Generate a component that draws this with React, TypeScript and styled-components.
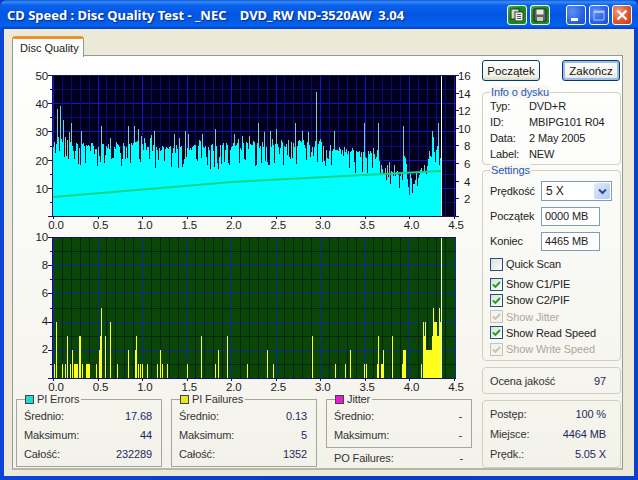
import React from "react";
import styled, { createGlobalStyle } from "styled-components";

const FONT = `"Liberation Sans", Arial, sans-serif`;

const Global = createGlobalStyle`
html, body { margin: 0; padding: 0; background: #0a3cc0; }
body { font-family: ${FONT}; font-size: 11px; letter-spacing: -0.12px; color: #222; }
* { box-sizing: border-box; }
`;

// chart geometry, in page pixels minus the svg origin
const OX = 16;
const PL = 53 - OX;
const PR = 456 - OX;
const W = 460;
const H = 162;
const PT = 7;
const PB = 148;
const Y_STEP = 14.1;
const X_MAJOR = 44.5;

const xLabels = ["0.0", "0.5", "1.0", "1.5", "2.0", "2.5", "3.0", "3.5", "4.0", "4.5"];

// top edge of the PI errors trace: [page x, value]
const envelope = [
  [53, 26], [60, 29], [72, 25], [100, 25], [130, 26], [170, 24], [232, 25], [260, 26],
  [320, 26], [345, 23], [372, 22], [379, 21], [384, 16], [400, 15], [404, 18], [408, 14],
  [420, 15], [425, 17], [431, 24], [441, 26],
];

const spikes: Record<number, number> = {
  57: 38, 60: 39, 63: 34, 71: 33, 81: 30, 101: 32, 128: 32, 134: 32, 138: 31, 154: 30,
  174: 29, 185: 30, 188: 29, 202: 29, 215: 31, 234: 29, 258: 33, 270: 30, 276: 31, 295: 33,
  302: 30, 316: 44, 334: 30, 364: 33, 378: 33, 403: 32, 432: 30, 438: 33,
};

const envelopeAt = (x: number) => {
  for (let i = 1; i < envelope.length; i++) {
    const [x0, v0] = envelope[i - 1];
    const [x1, v1] = envelope[i];
    if (x <= x1) return v0 + ((v1 - v0) * (x - x0)) / (x1 - x0);
  }
  return 24;
};

let seed = 4711;
const rand = () => {
  seed = (seed * 1103515245 + 12345) & 0x7fffffff;
  return seed / 0x7fffffff;
};

const traceValues: number[] = [];
for (let x = 53; x <= 441; x++) {
  const r = rand();
  const base = envelopeAt(x);
  const v = r < 0.24 ? base - 3 - rand() * 5 : r > 0.9 ? base + 1 + rand() * 3 : base - 2 + rand() * 3;
  traceValues.push(spikes[x] ?? v);
}

const valueY = (v: number) => PB - v * 2.82;

let solidPath = "";
let thinPath = "";
traceValues.forEach((v, i) => {
  const x = i + 53 - OX + 0.5;
  const shoulder = Math.max(traceValues[i - 1] ?? 0, traceValues[i + 1] ?? 0);
  const solid = Math.min(v, shoulder);
  solidPath += `M${x} ${PB}V${valueY(solid).toFixed(0)}`;
  if (v > solid) thinPath += `M${x} ${valueY(solid).toFixed(0)}V${valueY(v).toFixed(0)}`;
});

// PI failures bars: [page x, height]
const failures = [
  [54, 1], [56, 4], [62, 1], [65, 1], [67, 3], [70, 1], [72, 2], [74, 1], [75, 1], [76, 1], [77, 1],
  [79, 3], [80, 3], [82, 1], [86, 1], [87, 1], [88, 1], [89, 1], [96, 1], [99, 2], [100, 3], [101, 5],
  [105, 3], [110, 4], [117, 1], [128, 2], [135, 2], [136, 3], [138, 1], [140, 1], [142, 1], [147, 1],
  [157, 1], [160, 2], [162, 1], [167, 1], [187, 1], [201, 3], [215, 1], [218, 2], [227, 3], [247, 1],
  [267, 2], [273, 1], [312, 3], [335, 1], [345, 1], [350, 2], [364, 1], [366, 1], [377, 1], [378, 3],
  [381, 1], [382, 1], [383, 2], [392, 3], [402, 1], [403, 2], [404, 2], [405, 2], [421, 1], [423, 4],
  [424, 3], [425, 4], [426, 2], [427, 2], [428, 2], [429, 2], [430, 2], [431, 2], [432, 3], [433, 5],
  [434, 4], [435, 4], [436, 4], [437, 3], [438, 3], [439, 5], [440, 4], [441, 4],
];

const failuresPath = failures
  .map(([x, h]) => `M${x - OX + 0.5} ${PB}V${PB - h * 14.1}`)
  .join("");

const ChartFrame = styled.svg`
  display: block;
  flex: none;
  overflow: visible;
  font-family: ${FONT};
  font-size: 11.5px;
  letter-spacing: -0.2px;
  fill: #1c1c1c;
`;

type GridProps = { bg: string; minorV: string; minorH: string; major: string };

const PlotGrid = ({ bg, minorV, minorH, major }: GridProps) => {
  const verts = Array.from({ length: 46 }, (_, i) => i);
  const hors = Array.from({ length: 10 }, (_, i) => i + 1);
  return (
    <g shapeRendering="crispEdges">
      <rect x={PL} y={PT} width={PR - PL} height={PB - PT} fill={bg} />
      {hors.map((i) => (
        <line
          key={i}
          x1={PL}
          x2={PR}
          y1={Math.round(PT + i * Y_STEP) + 0.5}
          y2={Math.round(PT + i * Y_STEP) + 0.5}
          stroke={i % 2 ? minorH : major}
        />
      ))}
      {verts.map((i) => {
        const x = Math.round(PL + (i * X_MAJOR) / 5) + 0.5;
        return <line key={i} x1={x} x2={x} y1={PT} y2={PB} stroke={i % 5 ? minorV : major} />;
      })}
    </g>
  );
};

const AxisFrame = () => (
  <g shapeRendering="crispEdges" stroke="#14145a">
    <line x1={PL} x2={PR} y1={PT + 0.5} y2={PT + 0.5} />
    <line x1={PL} x2={PR} y1={PB + 0.5} y2={PB + 0.5} />
    <line x1={PL - 0.5} x2={PL - 0.5} y1={PT} y2={PB + 1} />
    {Array.from({ length: 11 }, (_, i) => {
      const y = Math.round(PT + i * Y_STEP) + 0.5;
      return <line key={i} x1={PL - (i % 2 ? 3 : 5)} x2={PL} y1={y} y2={y} />;
    })}
    {Array.from({ length: 10 }, (_, i) => {
      const x = Math.round(PL + i * X_MAJOR) + 0.5;
      return <line key={i} x1={x} x2={x} y1={PB} y2={PB + 3} />;
    })}
  </g>
);

const XLabels = () => (
  <g textAnchor="middle">
    {xLabels.map((t, i) => (
      <text key={t} x={56 - OX + i * 44.44} y={PB + 13}>
        {t}
      </text>
    ))}
  </g>
);

const QualityChart = () => (
  <ChartFrame width={W} height={H} viewBox={`0 0 ${W} ${H}`}>
    <PlotGrid bg="#00001c" minorV="#0a0a78" minorH="#0a0a78" major="#1515c8" />
    <path d={thinPath} stroke="#74cfc6" fill="none" shapeRendering="crispEdges" />
    <path d={solidPath} stroke="#00ffff" fill="none" shapeRendering="crispEdges" />
    <path d={`M${PL} ${197 - 68}L${232 - OX} ${182 - 68}L${441 - OX} ${171 - 68}`} stroke="#10d488" strokeWidth="2" fill="none" />
    <line x1={441.5 - OX} x2={441.5 - OX} y1={PT} y2={PB} stroke="#e6fff8" shapeRendering="crispEdges" />
    <AxisFrame />
    <g shapeRendering="crispEdges" stroke="#14145a">
      {Array.from({ length: 9 }, (_, i) => {
        const y = Math.round(PT + i * 17.6) + 0.5;
        return <line key={i} x1={PR} x2={PR + 3} y1={y} y2={y} />;
      })}
    </g>
    <g textAnchor="end">
      {["50", "40", "30", "20", "10"].map((t, i) => (
        <text key={t} x={48 - OX} y={12 + i * 28.2}>
          {t}
        </text>
      ))}
    </g>
    <g textAnchor="start">
      {["16", "14", "12", "10", "8", "6", "4", "2"].map((t, i) => (
        <text key={t} x={t.length > 1 ? 458 - OX : 464 - OX} y={12 + i * 17.6}>
          {t}
        </text>
      ))}
    </g>
    <XLabels />
  </ChartFrame>
);

const FailuresChart = () => (
  <ChartFrame width={W} height={H} viewBox={`0 0 ${W} ${H}`}>
    <PlotGrid bg="#0a4604" minorV="#01241c" minorH="#01241c" major="#0a2c9c" />
    <path d={failuresPath} stroke="#ffff1e" fill="none" shapeRendering="crispEdges" />
    <line x1={441.5 - OX} x2={441.5 - OX} y1={PT - 3} y2={PB} stroke="#f2ffe8" shapeRendering="crispEdges" />
    <AxisFrame />
    <g textAnchor="end">
      {["10", "8", "6", "4", "2"].map((t, i) => (
        <text key={t} x={48 - OX} y={11 + i * 28.1}>
          {t}
        </text>
      ))}
    </g>
    <XLabels />
  </ChartFrame>
);

const Window = styled.div`
  width: 638px;
  height: 480px;
  display: flex;
  flex-direction: column;
  overflow: hidden;
  background: linear-gradient(90deg, #0a45d8, #0a3cc0 50%, #0a3fd0);
  border-radius: 7px 7px 0 0;
`;

const TitleBar = styled.div`
  height: 29px;
  flex: none;
  display: flex;
  align-items: center;
  padding: 0 6px 0 7px;
  background: linear-gradient(180deg, #0a58e0 0, #3a8cf4 2px, #0a62ee 5px, #0456e2 50%, #0460ee 88%, #0240c8 100%);
`;

const TitleText = styled.div`
  flex: 1;
  font-family: "Noto Sans", ${FONT};
  font-weight: 700;
  font-size: 13px;
  letter-spacing: -0.03px;
  color: #fff;
  white-space: pre;
  text-shadow: 1px 1px 1px #0a2a80;
`;

const ToolGroup = styled.div`
  display: flex;
  gap: 3px;
  margin-right: 16px;
`;

const ControlGroup = styled.div`
  display: flex;
  gap: 3px;
`;

const CaptionButton = styled.div<{ $tone: "green" | "blue" | "red" }>`
  width: 20px;
  height: 20px;
  display: flex;
  align-items: center;
  justify-content: center;
  border: 1px solid #fff;
  border-radius: 3px;
  background: ${(p) =>
    p.$tone === "green"
      ? "radial-gradient(circle at 70% 70%, #1a9a28, #0f8a1c 55%, #46b84e)"
      : p.$tone === "red"
      ? "radial-gradient(circle at 30% 30%, #f0a080, #de5c34 50%, #c03a14)"
      : "radial-gradient(circle at 30% 30%, #5c90f4, #2c62e4 60%, #1c48c8)"};
`;

const Client = styled.div`
  flex: 1;
  margin: 0 4px 4px;
  padding: 7px 11px 6px 8px;
  background: #ece9d8;
  display: flex;
  flex-direction: column;
  min-height: 0;
`;

const TabStrip = styled.div`
  height: 19px;
  flex: none;
  display: flex;
`;

const Tab = styled.div`
  position: relative;
  z-index: 1;
  width: 72px;
  height: 21px;
  padding: 3px 0 0 7px;
  background: linear-gradient(180deg, #fff, #fbfbf8);
  border: 1px solid #919b9c;
  border-top: 3px solid #e8932e;
  border-bottom: none;
  border-radius: 3px 3px 0 0;
  letter-spacing: 0;
  color: #222;
  white-space: nowrap;
`;

const Panel = styled.div`
  flex: 1;
  min-height: 0;
  display: flex;
  gap: 6px;
  padding: 4px 1px 0 3px;
  border: 1px solid #919b9c;
  border-bottom: 2px solid #b8b6a6;
  background: linear-gradient(180deg, #fff, #f3f2ea);
`;

const LeftColumn = styled.div`
  width: 460px;
  flex: none;
  padding-top: 8px;
  display: flex;
  flex-direction: column;
`;

const StatsRow = styled.div`
  display: flex;
  gap: 9px;
  margin-top: 7px;
`;

const StatsColumn = styled.div`
  width: 146px;
  display: flex;
  flex-direction: column;
`;

const StatsBox = styled.div`
  position: relative;
  border: 1px solid #a5a5a0;
  padding: 6px 9px 3px 7px;
`;

const StatsTitle = styled.div`
  position: absolute;
  top: -7px;
  left: 8px;
  display: flex;
  align-items: center;
  gap: 3px;
  padding-right: 2px;
  background: #f5f4ee;
  color: #333;
`;

const Swatch = styled.span<{ $color: string }>`
  width: 9px;
  height: 9px;
  border: 1px solid #444;
  background: ${(p) => p.$color};
`;

const StatRow = styled.div`
  height: 19px;
  display: flex;
  align-items: center;
  justify-content: space-between;
  color: #333;
`;

const StatValue = styled.span`
  color: #1c2a60;
`;

const PoRow = styled(StatRow)`
  padding: 0 9px 0 8px;
  margin-top: 0;
`;

const RightColumn = styled.div`
  width: 139px;
  flex: none;
  display: flex;
  flex-direction: column;
`;

const ButtonRow = styled.div`
  display: flex;
  justify-content: space-between;
  padding-right: 1px;
  height: 21px;
`;

const ActionButton = styled.button<{ $active?: boolean }>`
  width: 58px;
  height: 21px;
  padding: 0;
  font: 11.5px ${FONT};
  color: #111;
  border: 1px solid #003c74;
  border-radius: 3px;
  background: linear-gradient(180deg, #fff, #f2f1e8 80%, #dcd8c8);
  box-shadow: ${(p) => (p.$active ? "inset 0 0 0 2px #9dbbe8" : "none")};
`;

const Group = styled.div<{ $top: number; $height: number }>`
  position: relative;
  margin-top: ${(p) => p.$top}px;
  height: ${(p) => p.$height}px;
  flex: none;
  border: 1px solid #d0d0bf;
  border-radius: 4px;
`;

const GroupTitle = styled.div`
  position: absolute;
  top: -7px;
  left: 7px;
  padding: 0 1px;
  background: #f8f7f2;
  color: #2458b4;
`;

const InfoBody = styled.div`
  padding: 5px 0 0 7px;
`;

const InfoRow = styled.div`
  height: 16px;
  display: grid;
  grid-template-columns: 39px 1fr;
  align-items: center;
  color: #222;
`;

const SettingsBody = styled.div`
  padding: 10px 0 0 7px;
  display: flex;
  flex-direction: column;
`;

const FieldRow = styled.div<{ $gap?: number }>`
  display: flex;
  align-items: center;
  height: 20px;
  margin-top: ${(p) => p.$gap ?? 0}px;
`;

const FieldLabel = styled.span`
  width: 51px;
  flex: none;
`;

const Select = styled.div`
  width: 71px;
  height: 20px;
  display: flex;
  align-items: center;
  justify-content: space-between;
  padding: 1px 1px 1px 4px;
  border: 1px solid #7f9db9;
  background: #fff;
  font-size: 12px;
`;

const SelectArrow = styled.span`
  width: 16px;
  height: 16px;
  display: flex;
  align-items: center;
  justify-content: center;
  border-radius: 2px;
  background: linear-gradient(135deg, #e2ebfd, #b4c8f6);
`;

const TextBox = styled.div`
  width: 59px;
  height: 19px;
  padding-left: 3px;
  line-height: 16px;
  border: 1px solid #7f9db9;
  background: #fff;
`;

const CheckRow = styled.div<{ $disabled?: boolean; $first?: boolean }>`
  height: ${(p) => (p.$first ? 16 : 16.25)}px;
  display: flex;
  align-items: center;
  gap: 3px;
  white-space: nowrap;
  color: ${(p) => (p.$disabled ? "#aca899" : "#222")};
`;

const CheckBox = styled.span<{ $disabled?: boolean }>`
  width: 13px;
  height: 13px;
  flex: none;
  display: flex;
  align-items: center;
  justify-content: center;
  border: 1px solid ${(p) => (p.$disabled ? "#c6c4b6" : "#1c5180")};
  background: ${(p) => (p.$disabled ? "#f4f3ec" : "linear-gradient(135deg, #dcdcd7, #fff)")};
`;

const CheckSpacer = styled.div<{ $height: number }>`
  height: ${(p) => p.$height}px;
`;

const SummaryBody = styled.div<{ $rowHeight: number; $pad: number }>`
  padding: ${(p) => p.$pad}px 14px 0 7px;
  display: flex;
  flex-direction: column;

  & > div {
    height: ${(p) => p.$rowHeight}px;
  }
`;

const Tool = ({ kind }: { kind: "copy" | "save" }) =>
  kind === "copy" ? (
    <svg width="14" height="14" viewBox="0 0 14 14">
      <rect x="1" y="1" width="8" height="10" fill="#d8d8c8" stroke="#333" />
      <rect x="5" y="4" width="8" height="9" fill="#f4f4e8" stroke="#333" />
      <path d="M7 6.5h4M7 8.5h4M7 10.5h4" stroke="#555" />
    </svg>
  ) : (
    <svg width="14" height="14" viewBox="0 0 14 14">
      <path d="M1 1h11l1 1v11H1z" fill="#5c6860" stroke="#222" />
      <rect x="3.5" y="1.5" width="7" height="5" fill="#e8e8dc" />
      <rect x="4" y="9" width="6" height="4" fill="#c8c8bc" />
    </svg>
  );

const Check = ({ disabled }: { disabled?: boolean }) => (
  <svg width="9" height="9" viewBox="0 0 9 9">
    <path d="M1 4.5l2.4 2.4L8 2" fill="none" stroke={disabled ? "#c6c4b6" : "#21a121"} strokeWidth="2" />
  </svg>
);

const stats = [
  { title: "PI Errors", color: "#20d8d8", rows: [["Średnio:", "17.68"], ["Maksimum:", "44"], ["Całość:", "232289"]] },
  { title: "PI Failures", color: "#e8e820", rows: [["Średnio:", "0.13"], ["Maksimum:", "5"], ["Całość:", "1352"]] },
];

const checks = [
  { label: "Show C1/PIE" },
  { label: "Show C2/PIF" },
  { label: "Show Jitter", disabled: true },
  { label: "Show Read Speed" },
  { label: "Show Write Speed", disabled: true },
];

const App = () => (
  <>
    <Global />
    <Window>
      <TitleBar>
        <TitleText>{"CD Speed : Disc Quality Test - _NEC    DVD_RW ND-3520AW  3.04"}</TitleText>
        <ToolGroup>
          <CaptionButton $tone="green">
            <Tool kind="copy" />
          </CaptionButton>
          <CaptionButton $tone="green">
            <Tool kind="save" />
          </CaptionButton>
        </ToolGroup>
        <ControlGroup>
          <CaptionButton $tone="blue">
            <svg width="14" height="14" viewBox="0 0 14 14">
              <rect x="2" y="10" width="7" height="3" fill="#fff" />
            </svg>
          </CaptionButton>
          <CaptionButton $tone="blue">
            <svg width="14" height="14" viewBox="0 0 14 14">
              <path d="M2 3h10v9H2z" fill="none" stroke="#a8c4f8" />
              <path d="M2 3h10v2H2z" fill="#a8c4f8" />
            </svg>
          </CaptionButton>
          <CaptionButton $tone="red">
            <svg width="14" height="14" viewBox="0 0 14 14">
              <path d="M2.5 2.5l9 9M11.5 2.5l-9 9" stroke="#fff" strokeWidth="2.4" />
            </svg>
          </CaptionButton>
        </ControlGroup>
      </TitleBar>
      <Client>
        <TabStrip>
          <Tab>Disc Quality</Tab>
        </TabStrip>
        <Panel>
          <LeftColumn>
            <QualityChart />
            <FailuresChart />
            <StatsRow>
              {stats.map((s) => (
                <StatsColumn key={s.title}>
                  <StatsBox>
                    <StatsTitle>
                      <Swatch $color={s.color} />
                      {s.title}
                    </StatsTitle>
                    {s.rows.map(([l, v]) => (
                      <StatRow key={l}>
                        {l}
                        <StatValue>{v}</StatValue>
                      </StatRow>
                    ))}
                  </StatsBox>
                </StatsColumn>
              ))}
              <StatsColumn>
                <StatsBox>
                  <StatsTitle>
                    <Swatch $color="#e020d0" />
                    Jitter
                  </StatsTitle>
                  <StatRow>
                    Średnio:
                    <StatValue>-</StatValue>
                  </StatRow>
                  <StatRow>
                    Maksimum:
                    <StatValue>-</StatValue>
                  </StatRow>
                </StatsBox>
                <PoRow>
                  PO Failures:
                  <StatValue>-</StatValue>
                </PoRow>
              </StatsColumn>
            </StatsRow>
          </LeftColumn>
          <RightColumn>
            <ButtonRow>
              <ActionButton>Początek</ActionButton>
              <ActionButton $active>Zakończ</ActionButton>
            </ButtonRow>
            <Group $top={11} $height={73}>
              <GroupTitle>Info o dysku</GroupTitle>
              <InfoBody>
                <InfoRow>
                  <span>Typ:</span>
                  <span>DVD+R</span>
                </InfoRow>
                <InfoRow>
                  <span>ID:</span>
                  <span>MBIPG101 R04</span>
                </InfoRow>
                <InfoRow>
                  <span>Data:</span>
                  <span>2 May 2005</span>
                </InfoRow>
                <InfoRow>
                  <span>Label:</span>
                  <span>NEW</span>
                </InfoRow>
              </InfoBody>
            </Group>
            <Group $top={5} $height={191}>
              <GroupTitle>Settings</GroupTitle>
              <SettingsBody>
                <FieldRow>
                  <FieldLabel>Prędkość</FieldLabel>
                  <Select>
                    5 X
                    <SelectArrow>
                      <svg width="9" height="7" viewBox="0 0 9 7">
                        <path d="M1 1.5l3.5 3.5L8 1.5" fill="none" stroke="#2c4a8c" strokeWidth="2" />
                      </svg>
                    </SelectArrow>
                  </Select>
                </FieldRow>
                <FieldRow $gap={5}>
                  <FieldLabel>Początek</FieldLabel>
                  <TextBox>0000 MB</TextBox>
                </FieldRow>
                <FieldRow $gap={5}>
                  <FieldLabel>Koniec</FieldLabel>
                  <TextBox>4465 MB</TextBox>
                </FieldRow>
                <CheckSpacer $height={5} />
                <CheckRow $first>
                  <CheckBox />
                  Quick Scan
                </CheckRow>
                <CheckSpacer $height={4} />
                {checks.map((c) => (
                  <CheckRow key={c.label} $disabled={c.disabled}>
                    <CheckBox $disabled={c.disabled}>
                      <Check disabled={c.disabled} />
                    </CheckBox>
                    {c.label}
                  </CheckRow>
                ))}
              </SettingsBody>
            </Group>
            <Group $top={6} $height={27}>
              <SummaryBody $rowHeight={18} $pad={4}>
                <StatRow>
                  Ocena jakość
                  <StatValue>97</StatValue>
                </StatRow>
              </SummaryBody>
            </Group>
            <Group $top={6} $height={68}>
              <SummaryBody $rowHeight={20} $pad={3}>
                <StatRow>
                  Postęp:
                  <StatValue>100 %</StatValue>
                </StatRow>
                <StatRow>
                  Miejsce:
                  <StatValue>4464 MB</StatValue>
                </StatRow>
                <StatRow>
                  Prędk.:
                  <StatValue>5.05 X</StatValue>
                </StatRow>
              </SummaryBody>
            </Group>
          </RightColumn>
        </Panel>
      </Client>
    </Window>
  </>
);

export default App;
